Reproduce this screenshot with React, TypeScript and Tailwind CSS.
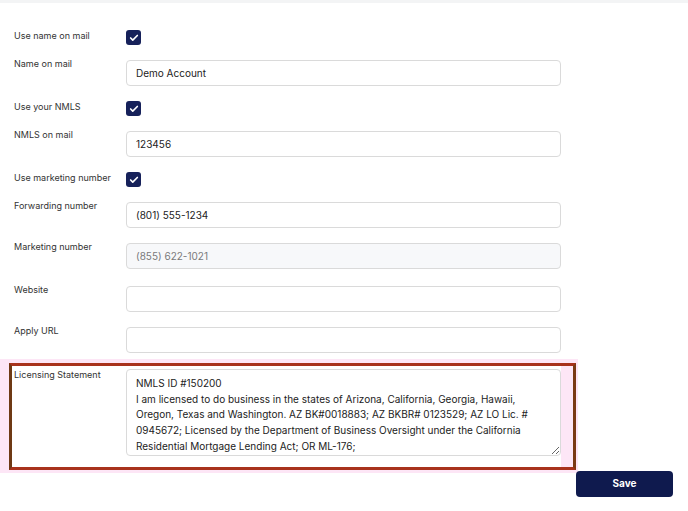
import { Check } from 'lucide-react';

const font = { fontFamily: 'Inter, "Noto Sans", sans-serif' };

const licensing =
    'NMLS ID #150200\nI am licensed to do business in the states of Arizona, California, Georgia, Hawaii,\nOregon, Texas and Washington. AZ BK#0018883; AZ BKBR# 0123529; AZ LO Lic. #\n0945672; Licensed by the Department of Business Oversight under the California\nResidential Mortgage Lending Act; OR ML-176;';

function Label({ children, offset = '' }: { children: React.ReactNode; offset?: string }) {
    return <label className={`w-[112px] shrink-0 text-[9px] leading-[9px] text-[#333] ${offset}`}>{children}</label>;
}

function CheckRow({ label }: { label: string }) {
    return (
        <div className="flex items-start h-[15px]">
            <Label offset="pt-[1px]">{label}</Label>
            <span className="w-[15px] h-[15px] rounded-[3px] bg-[#16215a] flex items-center justify-center">
                <Check className="w-[10px] h-[10px] text-white" strokeWidth={4} />
            </span>
        </div>
    );
}

function InputRow({ label, value, disabled }: { label: string; value?: string; disabled?: boolean }) {
    return (
        <div className="flex items-start">
            <Label offset="-mt-[1px]">{label}</Label>
            <input
                type="text"
                defaultValue={value || ''}
                disabled={disabled}
                className={`w-[435px] h-[26px] rounded-[4px] border border-[#dadada] px-[9px] text-[10px] outline-none ${
                    disabled ? 'bg-[#f7f8fa] text-[#7a7a7a]' : 'bg-white text-[#222]'
                }`}
                style={font}
            />
        </div>
    );
}

export default function App() {
    return (
        <div className="w-[688px] h-[511px] bg-white overflow-hidden" style={font}>
            <div className="h-[3px] bg-[#f3f4f5]" />
            <div className="flex flex-col gap-[15px] pl-[14px] pt-[27px]">
                <CheckRow label="Use name on mail" />
                <InputRow label="Name on mail" value="Demo Account" />
                <CheckRow label="Use your NMLS" />
                <InputRow label="NMLS on mail" value="123456" />
                <CheckRow label="Use marketing number" />
                <InputRow label="Forwarding number" value="(801) 555-1234" />
                <InputRow label="Marketing number" value="(855) 622-1021" disabled />
                <div className="mt-[2px]">
                    <InputRow label="Website" />
                </div>
                <InputRow label="Apply URL" />

                {/* Licensing statement, highlighted */}
                <div className="-mt-[9px] -ml-[14px] w-[578px] bg-[#fde6f6] pt-[4px] pb-[3px] pl-[9px]">
                    <div className="w-[567px] border-[3px] border-t-[#a8321c] border-b-[#a8321c] border-l-[#6e3914] border-r-[#7a3a14] flex">
                        <div className="flex bg-white pl-[2px] pt-[3px] pb-[11px]">
                            <Label offset="pt-[1px]">Licensing Statement</Label>
                            <textarea
                                defaultValue={licensing}
                                rows={5}
                                className="w-[435px] h-[87px] rounded-[4px] border border-[#dadada] px-[9px] pt-[6px] text-[10px] leading-[15.7px] text-[#222] bg-white outline-none whitespace-pre overflow-hidden"
                                style={font}
                            />
                        </div>
                        <div className="flex-1 bg-[#fde6f6]" />
                    </div>
                </div>
            </div>
            <div className="pl-[576px] -mt-[4px] relative">
                <button className="w-[97px] h-[26px] rounded-[4px] bg-[#0f1a4e] text-white text-[10px] font-bold">
                    Save
                </button>
            </div>
        </div>
    );
}
